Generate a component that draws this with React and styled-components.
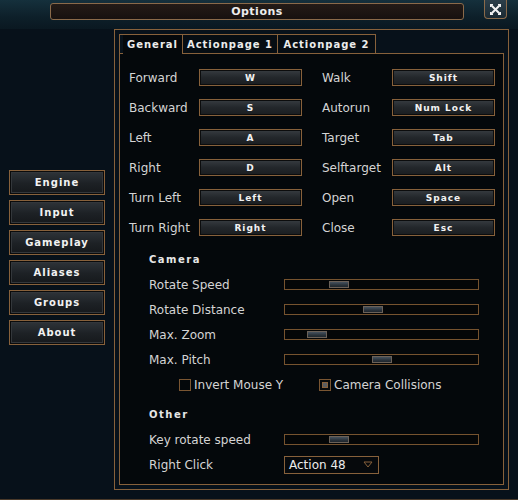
import styled, { createGlobalStyle } from 'styled-components';

const brown = '#87613b';

const GlobalStyle = createGlobalStyle`
  body {
    margin: 0;
    background: #07111a;
  }
`;

const navItems = ['Engine', 'Input', 'Gameplay', 'Aliases', 'Groups', 'About'];

const bindings = [
    ['Forward', 'W'], ['Walk', 'Shift'],
    ['Backward', 'S'], ['Autorun', 'Num Lock'],
    ['Left', 'A'], ['Target', 'Tab'],
    ['Right', 'D'], ['Selftarget', 'Alt'],
    ['Turn Left', 'Left'], ['Open', 'Space'],
    ['Turn Right', 'Right'], ['Close', 'Esc'],
];

// slider values as fraction of the free track
const cameraSliders = [
    ['Rotate Speed', 0.254],
    ['Rotate Distance', 0.45],
    ['Max. Zoom', 0.127],
    ['Max. Pitch', 0.503],
];

const Slider = ({ value }) => (
    <Track>
        <Handle style={{ left: `${value * 173}px` }} />
    </Track>
);

const App = () => {
    return (
        <Page>
            <GlobalStyle />
            <TopBar>
                <TitleBar>Options</TitleBar>
                <CloseButton>
                    <svg width="13" height="13" viewBox="0 0 13 13">
                        <path d="M2 2 L11 11 M11 2 L2 11" stroke="#f2f2f2" strokeWidth="2" />
                        <path d="M1 1h3v1H2v2H1z M12 1H9v1h2v2h1z M1 12h3v-1H2V9H1z M12 12H9v-1h2V9h1z" fill="#f2f2f2" />
                    </svg>
                </CloseButton>
            </TopBar>
            <Body>
                <SideNav>
                    {navItems.map((item) => (
                        <NavButton key={item}>{item}</NavButton>
                    ))}
                </SideNav>
                <OuterFrame>
                    <TabWidget>
                        <TabBar>
                            <Tab $active $width={59}>General</Tab>
                            <Tab $width={96}>Actionpage 1</Tab>
                            <Tab $width={99}>Actionpage 2</Tab>
                        </TabBar>
                        <TabPanel>
                            <KeyGrid>
                                {bindings.map(([label, key]) => (
                                    <Binding key={label}>
                                        <Label>{label}</Label>
                                        <KeyButton>{key}</KeyButton>
                                    </Binding>
                                ))}
                            </KeyGrid>
                            <Section>
                                <Heading $top={17}>Camera</Heading>
                                {cameraSliders.map(([label, value]) => (
                                    <SliderRow key={label}>
                                        <Label>{label}</Label>
                                        <Slider value={value} />
                                    </SliderRow>
                                ))}
                                <CheckRow>
                                    <CheckItem $width={140}>
                                        <CheckBox />
                                        <Label>Invert Mouse Y</Label>
                                    </CheckItem>
                                    <CheckItem>
                                        <CheckBox $checked />
                                        <Label>Camera Collisions</Label>
                                    </CheckItem>
                                </CheckRow>
                                <Heading $top={11}>Other</Heading>
                                <SliderRow>
                                    <Label>Key rotate speed</Label>
                                    <Slider value={0.254} />
                                </SliderRow>
                                <SliderRow>
                                    <Label>Right Click</Label>
                                    <Combo>
                                        <span>Action 48</span>
                                        <svg width="10" height="7" viewBox="0 0 10 7">
                                            <path d="M1 1 H9 L5 6 Z" fill="none" stroke={brown} strokeWidth="1" />
                                        </svg>
                                    </Combo>
                                </SliderRow>
                            </Section>
                        </TabPanel>
                    </TabWidget>
                </OuterFrame>
            </Body>
        </Page>
    );
};

const Page = styled.div`
  width: 518px;
  height: 500px;
  overflow: hidden;
  background: #07111a;
  font-family: "DejaVu Sans", sans-serif;
  border-bottom: 1px solid #4a3a2a;
  box-sizing: border-box;
`;

const TopBar = styled.div`
  height: 29px;
  box-sizing: border-box;
  display: flex;
  align-items: flex-start;
  padding: 3px 0 0 50px;
  background: linear-gradient(180deg, #15303c 0%, #0d1f29 60%, #0a1821 100%);
`;

const TitleBar = styled.div`
  width: 414px;
  height: 17px;
  box-sizing: border-box;
  border: 1px solid #8a6a4a;
  border-radius: 3px;
  background: linear-gradient(180deg, #241b17 0%, #17110f 100%);
  color: #ececec;
  font-family: "DejaVu Sans", sans-serif;
  font-weight: bold;
  font-size: 11px;
  letter-spacing: 0.5px;
  line-height: 15px;
  text-align: center;
`;

const CloseButton = styled.div`
  width: 23px;
  height: 19px;
  margin: -3px 0 0 20px;
  box-sizing: border-box;
  border: 1px solid #8a6a4a;
  border-top: none;
  border-radius: 0 0 4px 4px;
  background: linear-gradient(180deg, #2c3f4a 0%, #1b2a33 100%);
  display: flex;
  align-items: center;
  justify-content: center;
`;

const Body = styled.div`
  display: flex;
  height: 471px;
`;

const SideNav = styled.div`
  width: 114px;
  box-sizing: border-box;
  padding: 141px 0 0 9px;
  display: flex;
  flex-direction: column;
  gap: 5px;
`;

const NavButton = styled.div`
  width: 96px;
  height: 25px;
  box-sizing: border-box;
  border: 1px solid ${brown};
  box-shadow: inset 0 0 0 1px #0a0b0c, inset 0 0 0 2px #33373b;
  background: linear-gradient(180deg, #30353a 0%, #1d2125 55%, #15181b 100%);
  color: #f2f2f2;
  font-weight: bold;
  font-size: 10px;
  letter-spacing: 1px;
  display: flex;
  align-items: center;
  justify-content: center;
`;

const OuterFrame = styled.div`
  width: 395px;
  height: 461px;
  box-sizing: border-box;
  border: 1px solid ${brown};
  padding: 4px;
`;

const TabWidget = styled.div`
  height: 100%;
  display: flex;
  flex-direction: column;
`;

const TabBar = styled.div`
  align-self: flex-start;
  display: flex;
  height: 19px;
  box-sizing: border-box;
  border-top: 1px solid ${brown};
  border-left: 1px solid ${brown};
  padding-left: 3px;
`;

const Tab = styled.div`
  width: ${(p) => p.$width}px;
  height: ${(p) => (p.$active ? 19 : 18)}px;
  box-sizing: border-box;
  display: flex;
  align-items: center;
  justify-content: center;
  color: #ececec;
  font-weight: bold;
  font-size: 10px;
  letter-spacing: 1px;
  background: ${(p) => (p.$active ? '#04080b' : '#060d13')};
  border-right: ${(p) => (p.$active ? 'none' : `1px solid ${brown}`)};
  border-left: ${(p) => (p.$active ? 'none' : `1px solid ${brown}`)};
  margin-left: ${(p) => (p.$active ? 0 : -1)}px;
  position: relative;
  z-index: 1;
  &:nth-child(2) {
    margin-left: 0;
  }
`;

const TabPanel = styled.div`
  flex: 1;
  border: 1px solid ${brown};
  background: #04080b;
  padding: 15px 0 0 9px;
`;

const KeyGrid = styled.div`
  display: grid;
  grid-template-columns: 173px 173px;
  column-gap: 20px;
  row-gap: 13px;
`;

const Binding = styled.div`
  display: grid;
  grid-template-columns: 70px 103px;
  align-items: center;
  height: 17px;
`;

const Label = styled.span`
  color: #d4d4d4;
  font-family: "DejaVu Sans", sans-serif;
  font-size: 12px;
  white-space: nowrap;
`;

const KeyButton = styled.div`
  height: 17px;
  box-sizing: border-box;
  border: 1px solid ${brown};
  box-shadow: inset 0 0 0 1px #0b0c0d;
  background: linear-gradient(180deg, #373c41 0%, #23272b 50%, #1a1d20 100%);
  color: #f2f2f2;
  font-weight: bold;
  font-size: 9px;
  letter-spacing: 1px;
  display: flex;
  align-items: center;
  justify-content: center;
`;

const Section = styled.div`
  padding-left: 20px;
`;

const Heading = styled.div`
  height: 14px;
  line-height: 14px;
  margin: ${(p) => p.$top}px 0 5px 0;
  color: #e6e6e6;
  font-weight: bold;
  font-size: 10px;
  letter-spacing: 1.5px;
`;

const SliderRow = styled.div`
  display: grid;
  grid-template-columns: 135px 195px;
  align-items: center;
  height: 25px;
`;

const Track = styled.div`
  position: relative;
  height: 11px;
  box-sizing: border-box;
  border: 1px solid #76532f;
  background: #040607;
`;

const Handle = styled.div`
  position: absolute;
  top: 1px;
  width: 20px;
  height: 7px;
  box-sizing: border-box;
  border: 1px solid #6b6158;
  background: linear-gradient(180deg, #46525e 0%, #2a333b 60%, #1f262c 100%);
`;

const CheckRow = styled.div`
  display: flex;
  align-items: center;
  height: 25px;
  padding-left: 30px;
`;

const CheckItem = styled.div`
  display: flex;
  align-items: center;
  gap: 3px;
  width: ${(p) => (p.$width ? `${p.$width}px` : 'auto')};
`;

const CheckBox = styled.div`
  width: 12px;
  height: 12px;
  box-sizing: border-box;
  border: 1px solid #7a5632;
  display: flex;
  align-items: center;
  justify-content: center;
  &::after {
    content: '';
    display: ${(p) => (p.$checked ? 'block' : 'none')};
    width: 6px;
    height: 6px;
    box-sizing: border-box;
    border: 1px solid ${brown};
    background: #5a5d60;
  }
`;

const Combo = styled.div`
  width: 95px;
  height: 18px;
  box-sizing: border-box;
  border: 1px solid ${brown};
  background: #06090c;
  display: flex;
  align-items: center;
  justify-content: space-between;
  padding: 0 5px 0 4px;
  color: #ececec;
  font-size: 12px;
`;

export default App;
